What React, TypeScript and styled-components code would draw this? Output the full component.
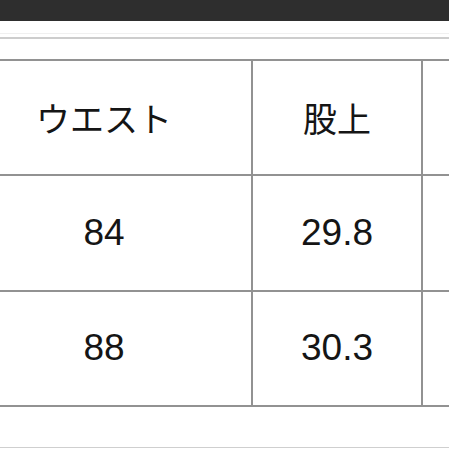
import styled, { createGlobalStyle } from 'styled-components'

const Global = createGlobalStyle`
  html, body {
    margin: 0;
    padding: 0;
    background: #fff;
    overflow: hidden;
  }
  body {
    font-family: "Liberation Sans", "Noto Sans CJK JP", sans-serif;
    color: #111;
  }
`

const Page = styled.div`
  width: 449px;
  height: 449px;
  overflow: hidden;
  display: flex;
  flex-direction: column;
`

const TopBar = styled.div`
  height: 21px;
  background: #2e2e2e;
  flex-shrink: 0;
`

const Band = styled.div`
  margin-top: 12px;
  height: 3px;
  border-top: 1px solid #f0f0f0;
  border-bottom: 2px solid #cdcdcd;
  flex-shrink: 0;
`

const SizeTable = styled.table`
  margin-top: 20px;
  margin-left: -45px;
  width: 666px;
  border-collapse: collapse;
  table-layout: fixed;
  flex-shrink: 0;

  td {
    border: 2px solid #929292;
    height: 113.4px;
    padding: 0;
    text-align: center;
    vertical-align: middle;
  }
`

const HeadCell = styled.td`
  font-family: "Noto Sans CJK JP", "Liberation Sans", sans-serif;
  font-size: 34px;
  font-weight: 400;
  color: #151515;
`

const NumCell = styled.td`
  font-size: 37px;
  color: #151515;
`

const FootLine = styled.div`
  margin-top: 40px;
  border-top: 1px solid #cfcfcf;
  flex-shrink: 0;
`

const rows = [
  ['84', '29.8', ''],
  ['88', '30.3', ''],
]

const App = () => (
  <Page>
    <Global />
    <TopBar />
    <Band />
    <SizeTable>
      <colgroup>
        <col style={{ width: 296 }} />
        <col style={{ width: 170 }} />
        <col style={{ width: 200 }} />
      </colgroup>
      <tbody>
        <tr>
          <HeadCell>ウエスト</HeadCell>
          <HeadCell>股上</HeadCell>
          <HeadCell />
        </tr>
        {rows.map((r, i) => (
          <tr key={i}>
            {r.map((v, j) => (
              <NumCell key={j}>{v}</NumCell>
            ))}
          </tr>
        ))}
      </tbody>
    </SizeTable>
    <FootLine />
  </Page>
)

export default App
